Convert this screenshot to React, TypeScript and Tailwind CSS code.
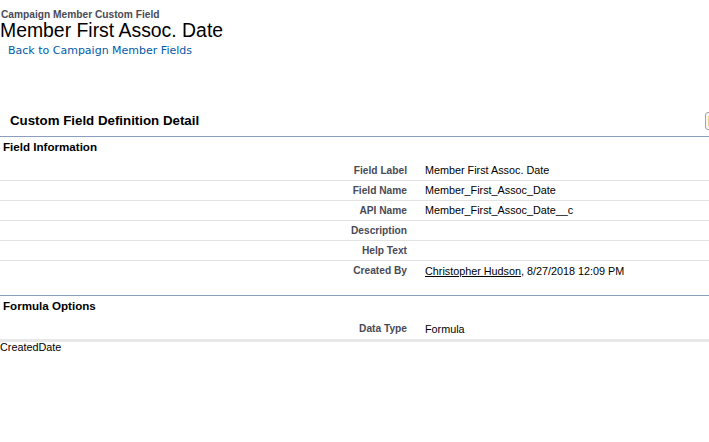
import React from "react";

const rows: { label: string; value: React.ReactNode; last?: boolean }[] = [
  { label: "Field Label", value: "Member First Assoc. Date" },
  { label: "Field Name", value: "Member_First_Assoc_Date" },
  { label: "API Name", value: "Member_First_Assoc_Date__c" },
  { label: "Description", value: "" },
  { label: "Help Text", value: "" },
  {
    label: "Created By",
    value: (
      <>
        <span className="underline">Christopher Hudson</span>, 8/27/2018 12:09 PM
      </>
    ),
    last: true,
  },
];

function Row({ label, value, last }: { label: string; value: React.ReactNode; last?: boolean }) {
  return (
    <div className={`flex h-[20px] items-center pb-[1px] ${last ? "" : "border-b border-[#e3e3e3]"}`}>
      <div className="w-[407px] shrink-0 text-right text-[10.2px] font-bold leading-[13px] text-[#4a4a56]">{label}</div>
      <div className="pl-[18px] text-[10.8px] leading-[14px] text-black whitespace-nowrap">{value}</div>
    </div>
  );
}

export default function App() {
  return (
    <div className="w-[709px] h-[442px] overflow-hidden bg-white" style={{ fontFamily: '"Liberation Sans", Arial, sans-serif' }}>
      <div className="pt-[8px]">
        <div className="text-[10.2px] font-bold leading-[13px] text-[#4a4a56] pl-[1px]">Campaign Member Custom Field</div>
        <div className="mt-[-1px] text-[19.4px] leading-[20px] text-black">Member First Assoc. Date</div>
        <div
          className="mt-[5px] pl-[8px] text-[11px] leading-[12px] text-[#015ba7]"
          style={{ fontFamily: '"DejaVu Sans", Verdana, sans-serif' }}
        >
          Back to Campaign Member Fields
        </div>
      </div>

      <div className="mt-[53px] flex h-[22px] items-center">
        <div className="pl-[10px] text-[13.3px] font-bold leading-[16px] text-black">Custom Field Definition Detail</div>
        <div className="ml-auto mr-[-20px] flex h-[18px] w-[24px] items-center rounded-[3px] border border-[#a5a5a5] bg-[#f6f6f6] pl-[2px]">
          <div className="h-[10px] w-[6px] bg-[#f4d37c]" />
        </div>
      </div>
      <div className="mt-[4px] h-px bg-[#8a9ebe]" />

      <div className="pl-[3px] pt-[3px] pb-[7px] text-[11.6px] font-bold leading-[14px] text-black">Field Information</div>
      {rows.map((r) => (
        <Row key={r.label} {...r} />
      ))}

      <div className="mt-[14px] h-px bg-[#8a9ebe]" />
      <div className="pl-[3px] pt-[3px] pb-[6px] text-[11.6px] font-bold leading-[14px] text-black">Formula Options</div>
      <Row label="Data Type" value="Formula" last />
      <div className="h-[3px] bg-[#e8e8e8]" />
      <div className="text-[10.8px] leading-[11px] text-black">CreatedDate</div>
    </div>
  );
}
